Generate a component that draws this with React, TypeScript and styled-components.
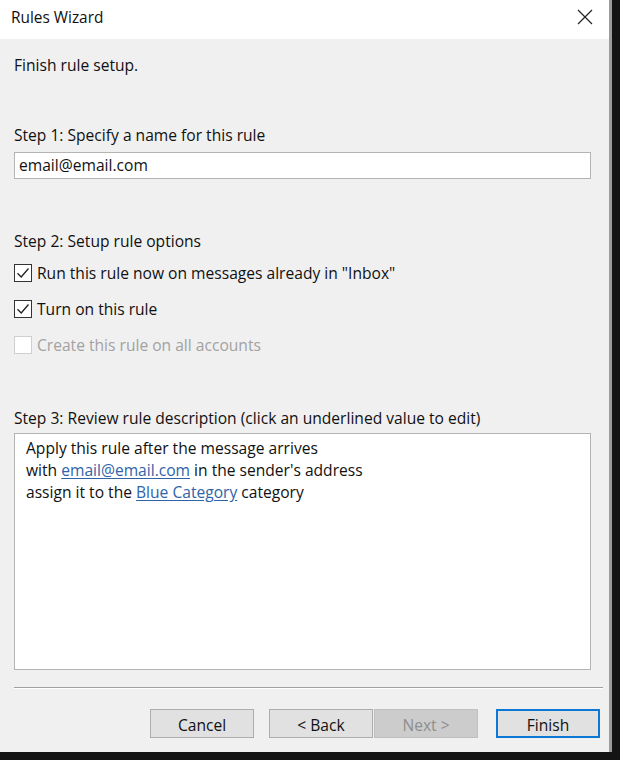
import React from "react";
import styled, { createGlobalStyle } from "styled-components";

const GlobalStyle = createGlobalStyle`
  html, body {
    margin: 0;
    padding: 0;
    background: #141414;
  }
  body {
    font-family: "Open Sans", "Noto Sans", "Liberation Sans", sans-serif;
    font-size: 15.6px;
    color: #111;
  }
`;

const Screen = styled.div`
  width: 620px;
  height: 760px;
  overflow: hidden;
  background: #141414;
`;

const Window = styled.div`
  width: 609px;
  height: 752px;
  border-right: 3px solid #9c9c9c;
  background: #f0f0f0;
  display: flex;
  flex-direction: column;
`;

const TitleBar = styled.div`
  height: 39px;
  background: #ffffff;
  display: flex;
  align-items: center;
  justify-content: space-between;
  padding: 0 16px 0 11px;
  flex-shrink: 0;
`;

const Title = styled.span`
  font-size: 15.4px;
  color: #111;
  margin-top: -4px;
`;

const CloseIcon = styled.svg`
  width: 16px;
  height: 16px;
  margin-top: -6px;
`;

const Body = styled.div`
  flex: 1;
  display: flex;
  flex-direction: column;
  padding: 16px 6px 0 14px;
`;

const Heading = styled.div<{ $gap: number }>`
  line-height: 20px;
  white-space: nowrap;
  margin-top: ${(p) => p.$gap}px;
`;

const NameInput = styled.div`
  box-sizing: border-box;
  height: 27px;
  width: 577px;
  margin-top: 7px;
  background: #fff;
  border: 1px solid #b4b4b4;
  padding: 0 4px;
  line-height: 25px;
`;

const Options = styled.div`
  margin-top: 12px;
  display: flex;
  flex-direction: column;
  gap: 16px;
`;

const OptionRow = styled.label<{ $disabled?: boolean }>`
  display: flex;
  align-items: center;
  gap: 5px;
  height: 20px;
  white-space: nowrap;
  color: ${(p) => (p.$disabled ? "#a2a2a2" : "#111")};
`;

const Box = styled.span<{ $disabled?: boolean }>`
  box-sizing: border-box;
  width: 18px;
  height: 18px;
  border: 1px solid ${(p) => (p.$disabled ? "#cfcfcf" : "#333")};
  background: #fff;
  display: flex;
  align-items: center;
  justify-content: center;
`;

const Description = styled.div`
  box-sizing: border-box;
  width: 577px;
  height: 237px;
  margin-top: 5px;
  background: #fff;
  border: 1px solid #b4b4b4;
  padding: 3px 11px;
  line-height: 22px;
`;

const Link = styled.a`
  color: #2f63a8;
  text-decoration: underline;
  text-underline-offset: 2px;
`;

const Separator = styled.div`
  margin-top: 17px;
  width: 589px;
  height: 1px;
  background: #a0a0a0;
  box-shadow: 0 1px 0 #fff;
`;

const ButtonRow = styled.div`
  margin-top: 21px;
  display: flex;
  justify-content: flex-end;
  padding-right: 3px;
`;

const Button = styled.button<{ $primary?: boolean; $space?: number }>`
  box-sizing: border-box;
  width: 104px;
  height: 29px;
  margin-left: ${(p) => p.$space ?? 0}px;
  font-family: inherit;
  font-size: 15.6px;
  color: #111;
  background: #e1e1e1;
  border: ${(p) => (p.$primary ? "2px solid #0a78d4" : "1px solid #adadad")};
  padding: 2px 0 0;

  &:disabled {
    background: #cccccc;
    border-color: #bfbfbf;
    color: #8e8e8e;
  }
`;

const Check: React.FC = () => (
  <svg width="14" height="14" viewBox="0 0 14 14">
    <path d="M1.5 7.2 L5.2 11 L12.5 2.5" fill="none" stroke="#222" strokeWidth="1.3" />
  </svg>
);

const Option: React.FC<{ label: string; checked?: boolean; disabled?: boolean }> = ({
  label,
  checked,
  disabled,
}) => (
  <OptionRow $disabled={disabled}>
    <Box $disabled={disabled}>{checked && <Check />}</Box>
    {label}
  </OptionRow>
);

export default function App() {
  return (
    <Screen>
      <GlobalStyle />
      <Window>
        <TitleBar>
          <Title>Rules Wizard</Title>
          <CloseIcon viewBox="0 0 16 16">
            <path d="M1 1 L15 15 M15 1 L1 15" stroke="#222" strokeWidth="1.2" />
          </CloseIcon>
        </TitleBar>
        <Body>
          <Heading $gap={0}>Finish rule setup.</Heading>

          <Heading $gap={50}>Step 1: Specify a name for this rule</Heading>
          <NameInput>email@email.com</NameInput>

          <Heading $gap={52}>Step 2: Setup rule options</Heading>
          <Options>
            <Option label={'Run this rule now on messages already in "Inbox"'} checked />
            <Option label="Turn on this rule" checked />
            <Option label="Create this rule on all accounts" disabled />
          </Options>

          <Heading $gap={53}>
            Step 3: Review rule description (click an underlined value to edit)
          </Heading>
          <Description>
            <div>Apply this rule after the message arrives</div>
            <div>
              with <Link>email@email.com</Link> in the sender's address
            </div>
            <div>
              assign it to the <Link>Blue Category</Link> category
            </div>
          </Description>

          <Separator />
          <ButtonRow>
            <Button>Cancel</Button>
            <Button $space={15}>&lt; Back</Button>
            <Button $space={1} disabled>
              Next &gt;
            </Button>
            <Button $space={18} $primary>
              Finish
            </Button>
          </ButtonRow>
        </Body>
      </Window>
    </Screen>
  );
}
